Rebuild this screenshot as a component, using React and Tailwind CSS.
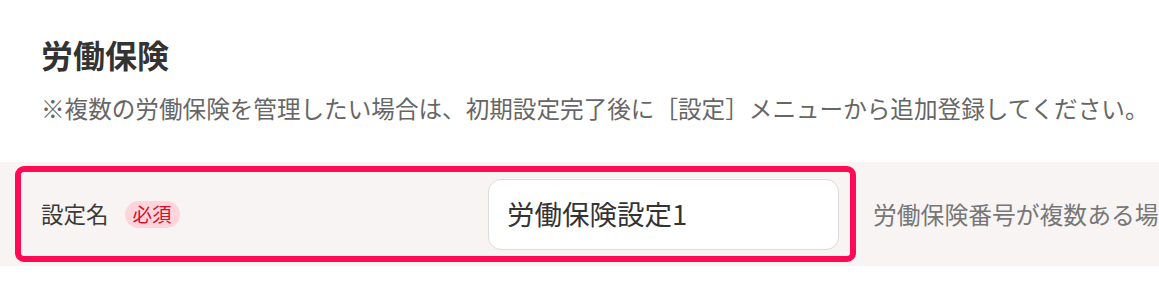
import React from "react";

const App = () => {
  return (
    <div
      className="w-[1159px] h-[287px] bg-white overflow-hidden"
      style={{ fontFamily: '"Noto Sans CJK JP", "Noto Sans", sans-serif' }}
    >
      <div className="pt-[34px] pl-[41px]">
        <h2 className="text-[32px] leading-[40px] font-bold text-[#333]">労働保険</h2>
        <p className="mt-[20px] text-[23.6px] leading-[28px] text-[#666] whitespace-nowrap">
          ※複数の労働保険を管理したい場合は、初期設定完了後に［設定］メニューから追加登録してください。
        </p>
      </div>

      <div className="mt-[40px] h-[104px] bg-[#f7f4f3] flex items-center pl-[15px] whitespace-nowrap overflow-hidden">
        <div className="shrink-0 flex items-center w-[841px] h-[96px] border-[6px] border-[#ff0a54] rounded-[9px] pl-[20px] pr-[11px]">
          <div className="flex items-center gap-[16px] flex-1">
            <span className="text-[22.5px] text-[#3a3a3a]">設定名</span>
            <span className="px-[8px] h-[27px] flex items-center rounded-full bg-[#ffd5db] text-[#d0102c] text-[19.5px]">
              必須
            </span>
          </div>
          <div className="w-[351px] h-[71px] bg-white border-[1.5px] border-[#dcdcdc] rounded-[13px] flex items-center pl-[18px] text-[27.5px] text-[#333]">
            労働保険設定1
          </div>
        </div>
        <span className="ml-[17px] text-[23.8px] text-[#777]">労働保険番号が複数ある場合は</span>
      </div>
    </div>
  );
};

export default App;
